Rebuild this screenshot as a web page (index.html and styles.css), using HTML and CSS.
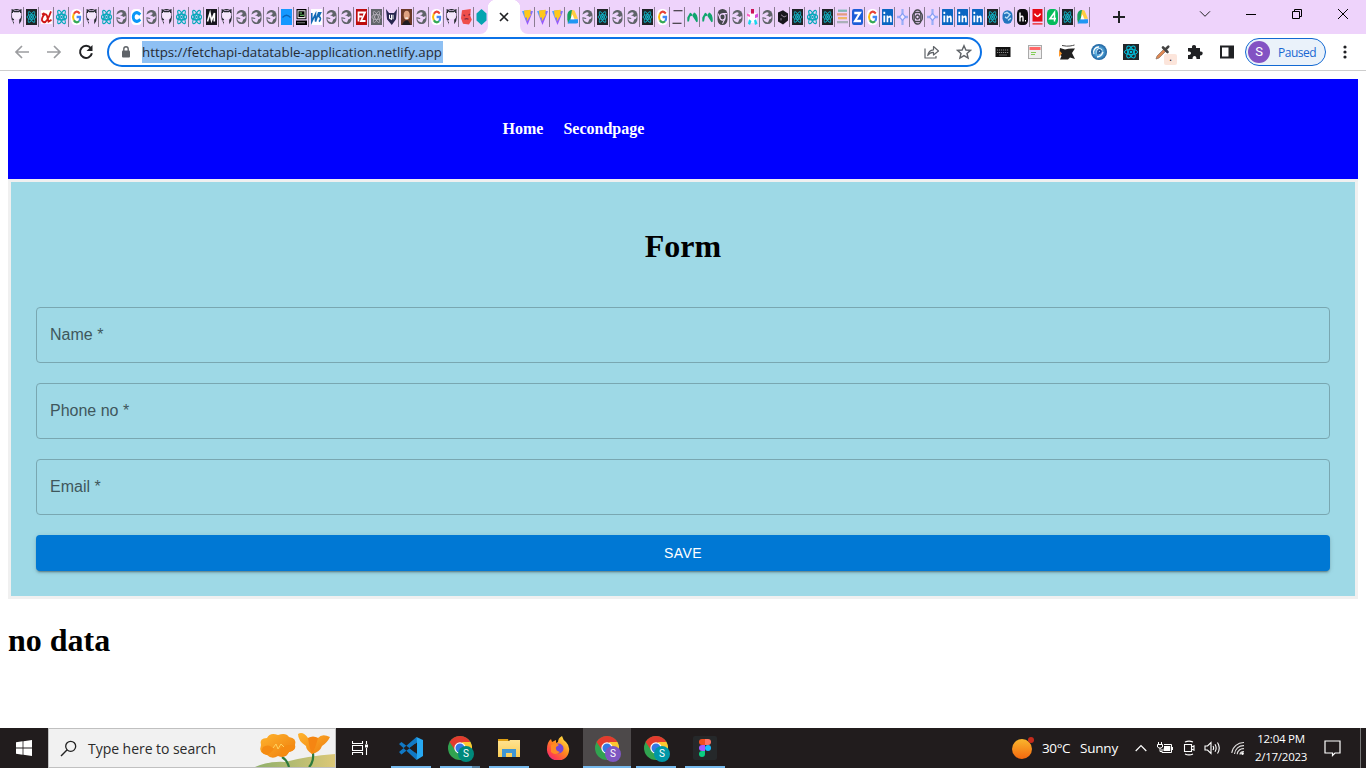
FILE: index.html
```html
<!DOCTYPE html>
<html lang="en">
<head>
<meta charset="utf-8">
<title>Form</title>
<link rel="stylesheet" href="styles.css">
</head>
<body>
<svg class="defs" aria-hidden="true">
  <defs>
    <linearGradient id="vg" x1="0" y1="0" x2="1" y2="1"><stop offset="0" stop-color="#41b8ff"/><stop offset="1" stop-color="#c02bff"/></linearGradient>
    <linearGradient id="sun" x1="0" y1="0" x2="0" y2="1"><stop offset="0" stop-color="#f9b62d"/><stop offset="1" stop-color="#f4680f"/></linearGradient>
    <linearGradient id="petal" x1="0" y1="0" x2="1" y2="1"><stop offset="0" stop-color="#ffb42e"/><stop offset="1" stop-color="#ee7c0c"/></linearGradient>
    <linearGradient id="hill" x1="0" y1="0" x2="1" y2="0"><stop offset="0" stop-color="#8fb06b"/><stop offset="1" stop-color="#dcc878"/></linearGradient>
    <linearGradient id="fox" x1="0.9" y1="0" x2="0.1" y2="1"><stop offset="0" stop-color="#fff04a"/><stop offset="0.45" stop-color="#ff8a1d"/><stop offset="0.8" stop-color="#ff3f4e"/><stop offset="1" stop-color="#d92aa0"/></linearGradient>
    <linearGradient id="fold" x1="0" y1="0" x2="0" y2="1"><stop offset="0" stop-color="#ffe391"/><stop offset="1" stop-color="#fbcd55"/></linearGradient>
    <radialGradient id="orb"><stop offset="0" stop-color="#e9f7ff"/><stop offset="0.45" stop-color="#5eb0e0"/><stop offset="1" stop-color="#1a5f9e"/></radialGradient>
    <symbol id="gh" viewBox="0 0 11 14"><path d="M2.2 0.5Q5.5 1.8 9 0.5Q10 1.2 10 4Q11.3 7 8.2 9.4V13.4Q11.4 10.5 10.8 5Q10.2 0 5.5 0Q0.6 0 0.2 5Q-.2 9.5 2.6 12.5L3 13.8V11.4Q1.5 11 1.3 9.4L3 10V9Q0 8 1 4Q1 1.2 2.2 .5Z" fill="#24292e"/><path d="M1.8 3Q5.5 1.5 9.2 3Q10 9 5.5 9Q1 9 1.8 3Z" fill="#f4e7fb"/><path d="M1.3 3.6V1L3.4 2.2H7.6L9.8 1V3.6" fill="none" stroke="#24292e" stroke-width="1.4"/></symbol>
    <symbol id="re" viewBox="0 0 11 14"><g fill="none" stroke="#08a8bb" stroke-width="1.2"><ellipse cx="5.5" cy="7" rx="5" ry="2.5"/><ellipse cx="5.5" cy="7" rx="2" ry="6.6" transform="rotate(-30 5.5 7)"/><ellipse cx="5.5" cy="7" rx="2" ry="6.6" transform="rotate(30 5.5 7)"/></g><circle cx="5.5" cy="7" r="1.2" fill="#08a8bb"/></symbol>
    <symbol id="rd" viewBox="0 0 11 14"><path d="M0 0H11V14H0Z" fill="#202427"/><g fill="none" stroke="#12b3c8" stroke-width=".85"><ellipse cx="5.5" cy="7" rx="4.3" ry="2"/><ellipse cx="5.5" cy="7" rx="1.6" ry="5.4" transform="rotate(-33 5.5 7)"/><ellipse cx="5.5" cy="7" rx="1.6" ry="5.4" transform="rotate(33 5.5 7)"/></g><circle cx="5.5" cy="7" r="1" fill="#12b3c8"/></symbol>
    <symbol id="gl" viewBox="0 0 11 14"><rect x=".5" y=".8" width="10" height="12.4" rx="4.5" fill="#5f6368"/><path d="M0 5L4 3Q7.5 2.5 6.3 4.6L4 6H6Q7.4 8 9.5 6L9.6 7.5Q9 9.3 7.4 9L6 11.8Q1.5 11.6 1.2 8.4L4.2 8.8V7.8L0 7Z" fill="#eed3fb"/></symbol>
    <symbol id="go" viewBox="0 0 11 14"><rect width="11" height="14" rx="4.5" fill="#fff"/><g fill="none" stroke-width="2"><path d="M8.8 4Q5.5 .5 2.8 4.2" stroke="#ea4335"/><path d="M2.8 4.2Q1.3 7 2.8 9.8" stroke="#fbbc05"/><path d="M2.8 9.8Q5.2 13 8.2 10.6" stroke="#34a853"/><path d="M8.2 10.6Q9.4 9 9.2 7H5.6" stroke="#4285f4"/></g></symbol>
    <symbol id="vi" viewBox="0 0 11 14"><path d="M0 2L5.5 .8L11 2L5.5 14Z" fill="url(#vg)"/><path d="M2 1.3L8.8 .6L8.2 4.5H9.2L4.8 11L5 7.5H2.8Z" fill="#ffc71c"/></symbol>
    <symbol id="dr" viewBox="0 0 11 14"><path d="M.3 9V5Q1 .8 5 .8H6L3.4 9.5L1 13Z" fill="#16a05d"/><path d="M5 .8L7.5 1.3L11 8.5L6.5 8.5L4 6Z" fill="#ffcd40"/><path d="M2.8 9H11V11.5Q11 12.8 9 12.8H.6Z" fill="#2196f3"/><path d="M5.4 4.5L7.4 9H3.6Z" fill="#fff"/></symbol>
    <symbol id="li" viewBox="0 0 11 14"><rect width="11" height="14" rx=".5" fill="#0a66c2"/><path d="M1.4 5.6H3.2V11.6H1.4ZM1.4 2.5H3.2V4.4H1.4ZM4.6 5.6H6.2V6.6Q9.8 4 9.8 8V11.6H8.1V8.4Q7.3 6.5 6.3 8.4V11.6H4.6Z" fill="#fff"/></symbol>
    <symbol id="di" viewBox="0 0 11 14"><path d="M5.5 0V5M5.5 9V14M0 7H3.5M7.5 7H11" stroke="#9aaef7" stroke-width="2.2"/><path d="M5.5 4L8.5 7L5.5 10L2.5 7Z" fill="#f2e9ff" stroke="#819bf5"/></symbol>
    <symbol id="ng" viewBox="0 0 11 14"><path d="M.3 11V7.5L3 3.2Q4.6 3 7.2 8L10.4 11Q11 5.5 7.5 3L5.3 6L9.5 11.5L10.8 11Q11 4 7 3L5 6L3 6.5L2 11Z" fill="#10a56e"/></symbol>
    <symbol id="at" viewBox="0 0 11 14"><g fill="none" stroke="#45474b" stroke-width="1.3"><rect x="2.2" y=".8" width="6.6" height="12.4" rx="3"/><rect x=".7" y="3" width="9.6" height="8" rx="3"/><circle cx="5.5" cy="7" r="1.8"/></g></symbol>
    <symbol id="chrome" viewBox="0 0 24 24"><circle cx="12" cy="12" r="12" fill="#31a350"/><path d="M1.6 6A12 12 0 0 1 22.4 6L12 8L7 14Z" fill="#e33b2e"/><path d="M22.4 6A12 12 0 0 1 12 24L17 14L14 6Z" fill="#fdc72f"/><circle cx="12" cy="12" r="5.7" fill="#fff"/><circle cx="12" cy="12" r="4.5" fill="#3578e5"/></symbol>
  </defs>
</svg>

<header class="browser">
  <div class="tabstrip">
    <div class="tabs tabs-left">
      <span class="tab"><svg><use href="#gh"/></svg></span>
      <span class="tab"><svg><use href="#rd"/></svg></span>
      <span class="tab"><svg viewBox="0 0 11 14"><rect y="1" width="11" height="12" fill="#fff"/><path d="M10 2Q6 12 3 11.5Q0 11 1.4 7.5Q4 2.5 6 6L7.5 11L10.5 9.5M1 5L3.5 3.5" fill="none" stroke="#cf1717" stroke-width="1.8"/></svg></span>
      <span class="tab"><svg><use href="#re"/></svg></span>
      <span class="tab"><svg><use href="#go"/></svg></span>
      <span class="tab"><svg><use href="#gh"/></svg></span>
      <span class="tab"><svg><use href="#re"/></svg></span>
      <span class="tab"><svg><use href="#gl"/></svg></span>
      <span class="tab"><svg viewBox="0 0 11 14"><rect width="11" height="14" rx="4" fill="#fff"/><path d="M9.3 5Q5.8 1.6 3 4.5Q1.5 7 3 9.5Q5.8 12.4 9.3 9" fill="none" stroke="#0996f8" stroke-width="2.8"/></svg></span>
      <span class="tab"><svg><use href="#gl"/></svg></span>
      <span class="tab"><svg><use href="#gh"/></svg></span>
      <span class="tab"><svg><use href="#re"/></svg></span>
      <span class="tab"><svg><use href="#re"/></svg></span>
      <span class="tab"><svg viewBox="0 0 11 14"><rect width="11" height="14" fill="#15151c"/><path d="M1.5 11L4 3.5L5.5 10L8.5 3.5L8.3 11" fill="none" stroke="#fff" stroke-width="1.6"/></svg></span>
      <span class="tab"><svg><use href="#gh"/></svg></span>
      <span class="tab"><svg><use href="#gl"/></svg></span>
      <span class="tab"><svg><use href="#gl"/></svg></span>
      <span class="tab"><svg><use href="#gl"/></svg></span>
      <span class="tab"><svg viewBox="0 0 11 14"><path d="M0 0H11V14H0Z" fill="#1598ff"/><path d="M1.5 7.5Q5.5 3.5 9.5 7.5" fill="none" stroke="#0b62b8" stroke-width="1.2"/></svg></span>
      <span class="tab"><svg viewBox="0 0 11 14"><path d="M.5 0H10.5V9H.5ZM0 10H11V14H0Z" fill="#000"/><path d="M2 1.5H9V7.5H2Z" fill="none" stroke="#e8e8e8"/><path d="M3.5 3.5H6M4 5.5H8" stroke="#7be07b"/><path d="M1.5 12H9.5" stroke="#fff" stroke-dasharray="1 1"/></svg></span>
      <span class="tab"><svg viewBox="0 0 11 14"><path d="M0 0H11V14H0Z" fill="#fff"/><path d="M.8 3.5V11L4.5 4.5V11L7.5 3.5H9.5L7.8 6.5Q11 8 8 11" fill="none" stroke="#146bb5" stroke-width="1.6"/></svg></span>
      <span class="tab"><svg><use href="#gl"/></svg></span>
      <span class="tab"><svg><use href="#gl"/></svg></span>
      <span class="tab"><svg viewBox="0 0 11 14"><path d="M0 0H11V14H0Z" fill="#bd0c0c"/><path d="M2.5 11V3H9L5 10.5H9.5M2.5 6.5H6" fill="none" stroke="#fff" stroke-width="1.7"/></svg></span>
      <span class="tab"><svg viewBox="0 0 11 14"><path d="M0 0H11V14H0Z" fill="#62656a"/><g fill="none" stroke="#b4afb8" stroke-width=".8"><ellipse cx="5.5" cy="7" rx="4.5" ry="2.3"/><ellipse cx="5.5" cy="7" rx="1.8" ry="5.5" transform="rotate(-30 5.5 7)"/><ellipse cx="5.5" cy="7" rx="1.8" ry="5.5" transform="rotate(30 5.5 7)"/></g></svg></span>
      <span class="tab"><svg viewBox="0 0 11 14"><path d="M0 0L3 3.5H8L11 0L10 9L5.8 14L1 9Z" fill="#27264f"/><path d="M3.5 5V8L5.5 9V5M7 5V9" fill="none" stroke="#fff"/></svg></span>
      <span class="tab"><svg viewBox="0 0 11 14"><path d="M0 0H11V14H0Z" fill="#6b3927"/><ellipse cx="5.7" cy="5.5" rx="3" ry="4" fill="#dfa181"/><path d="M1 14Q3 9.5 7 10L10 14Z" fill="#201c22"/><path d="M4.3 8H7" stroke="#fff"/></svg></span>
      <span class="tab"><svg><use href="#gl"/></svg></span>
      <span class="tab"><svg><use href="#go"/></svg></span>
      <span class="tab"><svg><use href="#gh"/></svg></span>
      <span class="tab"><svg viewBox="0 0 11 14"><path d="M1 1L9.8 0L9.3 6L10.8 9.5L8 13.5L2 13L0 8Z" fill="#ef4e4b"/><path d="M2.5 5L4 6M7.5 5.5L9 4.5M3.5 9Q5.5 7.8 7.5 9" fill="none" stroke="#83283d" stroke-width="1.2"/></svg></span>
      <span class="tab last"><svg viewBox="0 0 11 14"><path d="M5.5 0L10.5 4V10L5.5 14L.5 10V4Z" fill="#04a4b0"/></svg></span>
    </div>
    <div class="active-tab"><svg viewBox="0 0 10 10"><path d="M1 1L9 9M9 1L1 9" stroke="#202124" stroke-width="1.7"/></svg></div>
    <div class="tabs tabs-right">
      <span class="tab"><svg><use href="#vi"/></svg></span>
      <span class="tab"><svg><use href="#vi"/></svg></span>
      <span class="tab"><svg><use href="#vi"/></svg></span>
      <span class="tab"><svg><use href="#dr"/></svg></span>
      <span class="tab"><svg><use href="#gl"/></svg></span>
      <span class="tab"><svg><use href="#rd"/></svg></span>
      <span class="tab"><svg><use href="#gl"/></svg></span>
      <span class="tab"><svg><use href="#gl"/></svg></span>
      <span class="tab"><svg><use href="#rd"/></svg></span>
      <span class="tab"><svg><use href="#go"/></svg></span>
      <span class="tab"><svg viewBox="0 0 11 14"><path d="M1.5 1.5H10.5M.5 12.5H9.5" stroke="#1c1c1c" stroke-width="1"/></svg></span>
      <span class="tab"><svg><use href="#ng"/></svg></span>
      <span class="tab"><svg><use href="#ng"/></svg></span>
      <span class="tab"><svg viewBox="0 0 11 14"><rect x=".5" width="10" height="14" rx="4.8" fill="#45474b"/><circle cx="5.5" cy="7" r="2.7" fill="#45474b" stroke="#eed3fb" stroke-width="1.2"/><path d="M5.5 4H10M3 8L1 4M8 8.5L5.5 13" stroke="#eed3fb"/></svg></span>
      <span class="tab"><svg><use href="#gl"/></svg></span>
      <span class="tab"><svg viewBox="0 0 11 14"><rect x="1" y="3" width="9" height="9" rx="3" fill="#fff"/><path d="M4 0H7V4H4Z" fill="#cc1356"/><path d="M0 4L3 5V7L0 6Z" fill="#ff5fc4"/><path d="M8 5L11 4V7L8 8Z" fill="#d84ee0"/><path d="M2 9L4.5 10.5L3 14L1 13ZM7 10L9 9L10.5 13L8 14Z" fill="#1bd5ee"/></svg></span>
      <span class="tab"><svg><use href="#gl"/></svg></span>
      <span class="tab"><svg viewBox="0 0 11 14"><path d="M1 3L6 1L11 4V10L6 13.5L1 11Z" fill="#17171b"/><path d="M4 5L7 7L9.5 6M4 10V8" fill="none" stroke="#a99db0" stroke-width=".8"/></svg></span>
      <span class="tab"><svg><use href="#rd"/></svg></span>
      <span class="tab"><svg><use href="#re"/></svg></span>
      <span class="tab"><svg><use href="#rd"/></svg></span>
      <span class="tab"><svg viewBox="0 0 11 14"><path d="M1 1.5H10" stroke="#7db7b6" stroke-width="2"/><path d="M0 4.7H10" stroke="#e49b82" stroke-width="2"/><path d="M1 8H10" stroke="#efb86a" stroke-width="2"/><path d="M0 11.5H11" stroke="#aab0b9" stroke-width="2"/></svg></span>
      <span class="tab"><svg viewBox="0 0 11 14"><rect width="11" height="14" rx="2" fill="#1c5dd8"/><path d="M2.3 3.5H8L3 10.5H9" fill="none" stroke="#fff" stroke-width="2"/></svg></span>
      <span class="tab"><svg><use href="#go"/></svg></span>
      <span class="tab"><svg><use href="#li"/></svg></span>
      <span class="tab"><svg><use href="#di"/></svg></span>
      <span class="tab"><svg><use href="#at"/></svg></span>
      <span class="tab"><svg><use href="#di"/></svg></span>
      <span class="tab"><svg><use href="#li"/></svg></span>
      <span class="tab"><svg><use href="#li"/></svg></span>
      <span class="tab"><svg><use href="#li"/></svg></span>
      <span class="tab"><svg><use href="#rd"/></svg></span>
      <span class="tab"><svg viewBox="0 0 11 14"><rect x=".5" y="1" width="10" height="12" rx="5" fill="#2275be"/><path d="M2 4L5 3L8 5L5 8L3 7M6 10L9 8" fill="none" stroke="#b9def4" stroke-width="1.3"/></svg></span>
      <span class="tab"><svg viewBox="0 0 11 14"><rect width="11" height="14" rx="4" fill="#0c0c0e"/><path d="M3 3V11M3 7.5Q6 5 6 8V11M8 10.3H9" fill="none" stroke="#fff" stroke-width="1.4"/></svg></span>
      <span class="tab"><svg viewBox="0 0 11 14"><path d="M.5 0H10.5V11H.5Z" fill="#e50914"/><path d="M2.5 4Q5.5 9 8.5 4" fill="none" stroke="#fff" stroke-width="1.5"/><path d="M.5 13H10.5" stroke="#eb4b54" stroke-width="1.5"/></svg></span>
      <span class="tab"><svg viewBox="0 0 11 14"><rect width="11" height="14" rx="4" fill="#04bb5b"/><path d="M7.5 11V3L3 8.5H9" fill="none" stroke="#fff" stroke-width="1.5"/></svg></span>
      <span class="tab"><svg><use href="#rd"/></svg></span>
      <span class="tab"><svg><use href="#dr"/></svg></span>
    </div>
    <svg class="new-tab" viewBox="0 0 12 12"><path d="M6 0V12M0 6H12" stroke="#202124" stroke-width="2"/></svg>
    <div class="window-buttons">
      <svg viewBox="0 0 12 12"><path d="M1 3.3L6 8.3L11 3.3" fill="none" stroke="#222"/></svg>
      <svg viewBox="0 0 12 12"><path d="M1 6.5H11" stroke="#000"/></svg>
      <svg viewBox="0 0 12 12"><path d="M1.5 3.5H8.5V10.5H1.5ZM3.5 3.5V1.5H10.5V8.5H8.5" fill="none" stroke="#000"/></svg>
      <svg viewBox="0 0 12 12"><path d="M1 1L11 11M11 1L1 11" stroke="#000"/></svg>
    </div>
  </div>

  <div class="toolbar">
    <svg class="nav-icon" viewBox="0 0 16 16"><path d="M15 8H2M8 2L2 8L8 14" fill="none" stroke="#9c9da0" stroke-width="1.7"/></svg>
    <svg class="nav-icon" viewBox="0 0 16 16"><path d="M1 8H14M8 2L14 8L8 14" fill="none" stroke="#9c9da0" stroke-width="1.7"/></svg>
    <svg class="nav-icon" viewBox="0 0 16 16"><path d="M12.8 4.2A6 6 0 1 0 13.9 9.2" fill="none" stroke="#202124" stroke-width="2"/><path d="M14.5 1V7H8.5Z" fill="#202124"/></svg>
    <div class="address">
      <svg class="lock" viewBox="0 0 10 12"><rect x="1" y="4.5" width="8" height="7" rx="1" fill="#5f6368"/><path d="M2.8 5V3A2.2 2.2 0 0 1 7.2 3V5" fill="none" stroke="#5f6368" stroke-width="1.4"/></svg>
      <span class="url">https://fetchapi-datatable-application.netlify.app</span>
      <svg class="share" viewBox="0 0 16 14"><path d="M1 3.5V13H12V11M3.7 10.5Q4.5 5.2 9.5 4.8V1.5L14.5 6L9.5 10V7.4Q6 7.2 3.7 10.5Z" fill="none" stroke="#5f6368" stroke-width="1.2" stroke-linejoin="round"/></svg>
      <svg class="star" viewBox="0 0 16 16"><path d="M8 1.7L9.9 6L14.5 6.4L11 9.4L12.1 14L8 11.6L3.9 14L5 9.4L1.5 6.4L6.1 6Z" fill="none" stroke="#5f6368" stroke-width="1.4"/></svg>
    </div>
    <div class="extensions">
      <svg viewBox="0 0 16 16"><rect x=".5" y="3" width="15" height="10" fill="#111"/><path d="M2 6H14M2 8.5H14" stroke="#aaa" stroke-width=".8" stroke-dasharray="1.2 .8"/><path d="M4 11H12" stroke="#777" stroke-width=".8"/></svg>
      <svg viewBox="0 0 16 16"><rect x="1.5" y="1.5" width="13" height="13" fill="#eee" stroke="#aaa"/><rect x="2.5" y="3" width="11" height="3" fill="#ff6868"/><path d="M4 8.5H9M4 10.5H8" stroke="#82ce55"/></svg>
      <svg viewBox="0 0 16 16"><path d="M1 4L6 5.5Q10 4 16 4.5L13 9L16 15L11 13.5L9 15.5L1 15.5L2.5 12L0 10Z" fill="#202020"/><path d="M0 6L3 9.5L0 13Z" fill="#ff9a2e"/><path d="M3 1.5Q8 2.5 11 2T15.5 1" fill="none" stroke="#444"/></svg>
      <svg viewBox="0 0 16 16"><circle cx="8" cy="8" r="8" fill="url(#orb)"/><path d="M3 10A5 5 0 0 1 8 3M6 13Q10 13 12 8" fill="none" stroke="#fff" stroke-width="1.3"/><circle cx="8.5" cy="7" r="2.8" fill="#e6f5ff"/><path d="M7 10.5V7Q8 4.7 10 7Q10 9 8 9" fill="none" stroke="#1e5d9b" stroke-width="1.8"/></svg>
      <svg viewBox="0 0 16 16"><rect width="16" height="16" fill="#22272b"/><g fill="none" stroke="#00c0df"><ellipse cx="8" cy="8" rx="6.6" ry="2.7"/><ellipse cx="8" cy="8" rx="6.6" ry="2.7" transform="rotate(60 8 8)"/><ellipse cx="8" cy="8" rx="6.6" ry="2.7" transform="rotate(-60 8 8)"/></g><circle cx="8" cy="8" r="1.3" fill="#00c0df"/></svg>
      <span class="picker"><svg viewBox="0 0 16 16"><path d="M1 15L2 12L9 5L11 7L4 14Z" fill="#e08852" stroke="#8b7164" stroke-width=".7"/><path d="M8 3.5L12.5 8M10.5 5.5L13.3 2.7" fill="none" stroke="#444" stroke-width="2.6" stroke-linecap="round"/></svg><span class="picker-badge">.</span></span>
      <svg viewBox="0 0 16 16"><path d="M1 4H5Q4.5 1 7 1T9 4H13V7.5Q16 7 15.7 9.4T13 11.5V15H9.5Q9.5 12 7.5 12T5.5 15H1V11Q4 11 4 9T1 7.5Z" fill="#202124"/></svg>
      <svg viewBox="0 0 16 16"><path d="M1 1.5H15V14.5H1Z" fill="#202124"/><path d="M3 3.5H9.5V12.5H3Z" fill="#fff"/></svg>
    </div>
    <div class="profile"><span class="avatar">S</span><span class="paused">Paused</span></div>
    <svg class="kebab" viewBox="0 0 4 14"><circle cx="2" cy="2" r="1.6"/><circle cx="2" cy="7" r="1.6"/><circle cx="2" cy="12" r="1.6"/></svg>
  </div>
</header>

<main class="page">
  <nav class="site-nav"><a>Home</a><a>Secondpage</a></nav>
  <form class="form-box">
    <h1 class="form-title">Form</h1>
    <div class="field">Name *</div>
    <div class="field">Phone no *</div>
    <div class="field">Email *</div>
    <button class="save" type="button">SAVE</button>
  </form>
  <h1 class="no-data">no data</h1>
</main>

<footer class="taskbar">
  <div class="start"><svg viewBox="0 0 16 16"><path d="M0 2.2L6.6 1.3V7.5H0ZM7.4 1.2L16 0V7.5H7.4ZM0 8.4H6.6V14.7L0 13.8ZM7.4 8.4H16V16L7.4 14.8Z" fill="#fff"/></svg></div>
  <div class="search">
    <svg class="magnifier" viewBox="0 0 17 17"><circle cx="10.7" cy="6.3" r="5" fill="none" stroke="#222" stroke-width="1.3"/><path d="M7.2 9.8L1 16" stroke="#222" stroke-width="1.4"/></svg>
    <span class="search-text">Type here to search</span>
    <svg class="flowers" viewBox="0 0 80 38"><path d="M0 38Q14 32 30 33Q52 27 80 25V38Z" fill="url(#hill)"/><path d="M27 28Q32 31 34 38M58 24Q59 33 54 38" fill="none" stroke="#2d7a3c" stroke-width="2.2"/><path d="M6 16Q4 9 12 9Q15 3 23 6Q31 3 34 8Q42 9 40 16Q42 21 34 23Q31 30 23 27Q17 31 12 26Q3 24 6 16Z" fill="url(#petal)"/><path d="M8 18Q14 14 19 20Q15 25 12 26Q4 24 8 18ZM25 20Q31 14 40 17Q40 22 34 23Q31 27 27 27Z" fill="#f58b12"/><path d="M18 19L21 15L23 20L26 15L29 18" fill="none" stroke="#ffd15e"/><path d="M43 5Q48 2 53 9L58 8L63 9Q67 4 75 8Q72 14 67 17Q65 23 57 25Q51 21 51 17Q43 12 43 5Z" fill="url(#petal)"/><path d="M53 9Q54 18 57 25Q61 18 63 9Q58 6 53 9Z" fill="#f58512"/></svg>
  </div>
  <div class="task-view"><svg viewBox="0 0 16 16"><path d="M.5 1V3.5H10.5V1M.5 15V12.5H10.5V15M.5 5.5H10.5V10.5H.5ZM14.5 1V4M14.5 8V15" fill="none" stroke="#fff" stroke-width="1.1"/><path d="M13 4.5H16V7.5H13Z" fill="#fff"/></svg></div>
  <div class="apps">
    <span class="app running"><svg viewBox="0 0 24 24"><path d="M17.5 1L24 4V20L17.5 24L16 18V6Z" fill="#27a8f2"/><path d="M17.5 1L0 16L2.5 18.5L18 6.5ZM0 8L2.5 6L18 18L17.5 24Z" fill="#1179c5"/><path d="M18 6.5V18L10.5 12Z" fill="#211c1d"/></svg></span>
    <span class="app running split"><svg><use href="#chrome"/></svg><b class="badge green">S</b></span>
    <span class="app running"><svg viewBox="0 0 24 24"><path d="M1 3H11L12 6H1Z" fill="#e0a013"/><path d="M1 5H12L13 4H23V21H1Z" fill="url(#fold)"/><path d="M5 13H19V21H15V17H9V21H5Z" fill="#3f96d4"/></svg></span>
    <span class="app"><svg viewBox="0 0 24 24"><path d="M1 13Q1 6 5 3L6 6L10 4L10 7L12 6Q12 2 16 0Q17 4 20 6Q24 10 23 15A11 10.5 0 0 1 1 13Z" fill="url(#fox)"/><circle cx="12.5" cy="12.5" r="5" fill="#7647d6"/><path d="M5 9Q10 6 13 9L10 11Q9 15 14 16Q9 20 5 16Z" fill="#ff8b24"/></svg></span>
    <span class="app running current"><svg><use href="#chrome"/></svg><b class="badge purple">S</b></span>
    <span class="app running"><svg><use href="#chrome"/></svg><b class="badge teal">S</b></span>
    <span class="app running"><svg viewBox="0 0 24 24"><rect width="24" height="24" rx="2" fill="#25282a"/><path d="M12 3H9A3 3 0 0 0 9 9H12Z" fill="#f24e1e"/><path d="M12 3H15A3 3 0 0 1 15 9H12Z" fill="#ff7262"/><path d="M12 9H9A3 3 0 0 0 9 15H12Z" fill="#a259ff"/><circle cx="15" cy="12" r="3" fill="#1abcfe"/><path d="M12 15H9A3 3 0 1 0 12 18Z" fill="#0acf83"/></svg></span>
  </div>
  <div class="tray">
    <svg class="weather" viewBox="0 0 24 24"><circle cx="11" cy="13" r="10" fill="url(#sun)"/><circle cx="20" cy="4" r="3" fill="#c42b1c"/></svg>
    <span class="temperature">30°C</span><span class="sunny">Sunny</span>
    <svg class="chevron" viewBox="0 0 12 8"><path d="M.7 7L6 1.5L11.3 7" fill="none" stroke="#fff" stroke-width="1.2"/></svg>
    <svg class="battery" viewBox="0 0 17 14"><path d="M1.5 1V3M4.5 1V3M.5 3.5H5.5V6L4 7H2L.5 6ZM3 7V10.5H5M7 3.5H14.5V11.5H5V8" fill="none" stroke="#fff"/><path d="M7 5H13.3V10H6.5V7.5H7ZM15 6H16V9H15Z" fill="#fff"/></svg>
    <svg class="meet" viewBox="0 0 12 16"><path d="M1.5 4.5H8.5V11.5H1.5ZM8.5 7L11 5.8V10.2L8.5 9M2 2Q6 .2 10 2M2 14Q6 15.8 10 14" fill="none" stroke="#fff" stroke-width="1.1"/></svg>
    <svg class="volume" viewBox="0 0 17 14"><path d="M1 5H3.5L7 1.5V12.5L3.5 9H1ZM9 5Q10.3 7 9 9M11 3.3Q13.3 7 11 10.7M13.5 1.5Q17 7 13.5 12.5" fill="none" stroke="#fff" stroke-width="1.1"/></svg>
    <svg class="wifi" viewBox="0 0 14 14"><path d="M.8 12A12 12 0 0 1 13 1.5M3.5 13A9 9 0 0 1 13 4.6M6.2 13.3A6 6 0 0 1 13 7.7M8.8 13.5A4 4 0 0 1 13 10.7" fill="none" stroke="#e2e0e0" stroke-width="1.1"/><circle cx="11.5" cy="12.6" r="1.3" fill="#fff"/></svg>
    <div class="clock"><span>12:04 PM</span><span class="date">2/17/2023</span></div>
    <svg class="notice" viewBox="0 0 17 17"><path d="M1 1H16V13H11L8.5 15.5V13H1Z" fill="none" stroke="#fff" stroke-width="1.2"/></svg>
    <span class="show-desktop"></span>
  </div>
</footer>
</body>
</html>
```
FILE: styles.css
```css
* { box-sizing: border-box; }
body {
  margin: 0;
  width: 1366px;
  height: 768px;
  overflow: hidden;
  display: flex;
  flex-direction: column;
  background: #fff;
  font-family: "Liberation Serif", serif;
}
svg { display: block; flex: none; }
.defs { position: absolute; width: 0; height: 0; }

.browser { flex: none; height: 71px; border-bottom: 1px solid #cdcdcd; font-family: "Open Sans", sans-serif; }
.tabstrip { display: flex; height: 34px; background: #fff; }
.tabs { display: flex; background: #eed3fb; }
.tabs-left { padding-left: 9px; width: 488px; overflow: hidden; border-bottom-right-radius: 8px; }
.tabs-right { border-bottom-left-radius: 8px; }
.tab { flex: none; width: 15px; height: 20px; margin-top: 7px; border-right: 1px solid #8b7c92; display: flex; align-items: center; justify-content: center; }
.tab.last { border: 0; width: 14px; }
.tab svg { width: 11px; height: 14px; transform: scaleY(1.14); }
.active-tab { width: 32px; flex: none; display: flex; align-items: center; justify-content: center; background: linear-gradient(#eed3fb 8px, #fff 8px); }
.active-tab { background: radial-gradient(circle at 8px 8px, #fff 8px, #eed3fb 8.5px) 0 0 / 8px 8px no-repeat, radial-gradient(circle at 0 8px, #fff 8px, #eed3fb 8.5px) 100% 0 / 8px 8px no-repeat, #fff; }
.active-tab svg { width: 10px; height: 10px; }
.tabs-left, .tabs-right, .new-tab, .window-buttons { flex: none; }
.tabstrip .new-tab { width: 58px; height: 34px; padding: 11px 23px; background: #eed3fb; }
.window-buttons { width: 218px; display: flex; align-items: flex-start; gap: 34px; padding: 8px 0 0 51px; background: #eed3fb; }
.window-buttons svg { width: 12px; height: 12px; }

.toolbar { height: 36px; display: flex; align-items: center; padding-left: 14px; }
.nav-icon { width: 16px; height: 16px; margin-right: 16px; }
.address { flex: none; width: 875px; height: 30px; margin-left: -3px; border: 2px solid #0b72e7; border-radius: 15px; display: flex; align-items: center; padding-left: 12px; }
.lock { width: 10px; height: 12px; }
.url { margin-left: 11px; width: 301px; height: 22px; line-height: 22px; font-size: 13.3px; white-space: nowrap; color: #252b33; background: #8ec0f3; }
.share { width: 16px; height: 14px; margin-left: 481px; }
.star { width: 16px; height: 16px; margin-left: 16px; }
.extensions { display: flex; gap: 16px; margin-left: 13px; }
.extensions svg { width: 16px; height: 16px; }
.picker { position: relative; }
.picker-badge { position: absolute; left: 9px; top: 10px; width: 13px; height: 11px; border-radius: 2px; background: #fce5db; font-size: 10px; line-height: 7px; text-align: center; }
.profile { flex: none; width: 81px; height: 28px; margin-left: 10px; border: 1px solid #1269d3; border-radius: 14px; background: #eaf2fa; display: flex; align-items: center; padding-left: 2px; }
.avatar { width: 22px; height: 22px; border-radius: 50%; background: #8352c3; color: #fff; font: 13px/22px Roboto, sans-serif; text-align: center; }
.paused { margin-left: 8px; font-size: 12px; letter-spacing: -.5px; color: #1967d2; }
.kebab { width: 4px; height: 14px; margin-left: 17px; fill: #202124; }

.page { flex: none; height: 657px; padding: 8px 8px 0; }
.site-nav { height: 100px; display: flex; gap: 20px; align-items: center; padding-left: 494.5px; background: #00f; color: #fff; font-size: 16px; font-weight: bold; }
.form-box { height: 420px; border: 3px solid #f0f0f0; background: #9ed9e6; padding: 46px 25px 0; }
.form-title { margin: 0 0 42px; font-size: 32px; line-height: 37px; text-align: center; }
.field { height: 56px; margin-bottom: 20px; padding-left: 13px; border: 1px solid #79a7b1; border-radius: 4px; font: 16px/53px "Liberation Sans", sans-serif; letter-spacing: 0; color: #3f575c; }
.save { display: block; width: 100%; height: 36px; border: 0; border-radius: 4px; background: #0078d4; color: #fff; font: 14px/36px "Liberation Sans", sans-serif; letter-spacing: .4px; padding: 0; box-shadow: 0 3px 1px -2px #0003, 0 2px 2px #00000024, 0 1px 5px #0000001f; }
.no-data { margin: 23px 0 0; font-size: 32px; line-height: 37px; }

.taskbar { flex: none; height: 40px; display: flex; background: #211c1d; color: #fff; font-family: "Open Sans", sans-serif; }
.start { width: 48px; display: flex; align-items: center; justify-content: center; }
.start svg { width: 16px; height: 16px; }
.search { width: 288px; height: 40px; border: 1px solid #c0c0c0; background: #f1f1f1; display: flex; align-items: center; padding-left: 11px; }
.magnifier { width: 17px; height: 17px; }
.search-text { width: 140px; margin-left: 11px; font-size: 14px; letter-spacing: -.04px; color: #2b2b2b; white-space: nowrap; }
.flowers { width: 80px; height: 38px; margin-left: 28px; }
.task-view { width: 51px; padding: 12px 0 0 16px; }
.task-view svg { width: 16px; height: 16px; }
.apps { display: flex; }
.app { position: relative; width: 48px; margin-right: 1px; display: flex; align-items: center; justify-content: center; }
.app svg { width: 24px; height: 24px; }
.app.running::after { content: ""; position: absolute; left: 4px; bottom: 0; width: 40px; height: 2px; background: #76b9ed; }
.app.split::after { background: linear-gradient(90deg, #76b9ed 32px, #557f9f 32px); }
.app.current { background: #4d494a; }
.app.current::after { left: 0; width: 48px; }
.badge { position: absolute; left: 22px; top: 18px; width: 16px; height: 16px; border-radius: 50%; font: 10px/16px Roboto, sans-serif; text-align: center; }
.green { background: #00897b; }
.purple { background: #7e57c2; }
.teal { background: #0097a7; }
.tray { margin-left: auto; width: 355px; display: flex; align-items: center; flex: none; }
.weather { width: 24px; height: 24px; }
.temperature { width: 30px; margin-left: 7px; font-size: 13.5px; letter-spacing: -.4px; white-space: nowrap; }
.sunny { width: 39px; margin-left: 8px; font-size: 13.5px; letter-spacing: -.2px; }
.chevron { width: 12px; height: 8px; margin-left: 16px; }
.battery { width: 17px; height: 14px; margin-left: 10px; }
.meet { width: 12px; height: 16px; margin-left: 9px; }
.volume { width: 17px; height: 14px; margin-left: 9px; }
.wifi { width: 14px; height: 14px; margin-left: 10px; }
.clock { width: 56px; margin-left: 8px; display: flex; flex-direction: column; align-items: center; font-size: 11.5px; line-height: 18px; letter-spacing: -.25px; white-space: nowrap; }
.notice { width: 17px; height: 17px; margin-left: 15px; }
.show-desktop { width: 1px; height: 40px; margin-left: 19px; background: #777; }
```
